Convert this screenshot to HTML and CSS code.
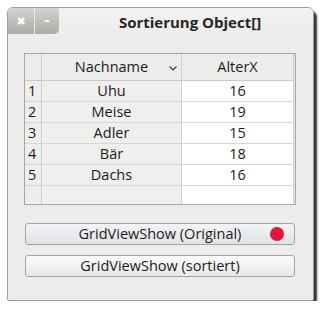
FILE: index.html
```html
<!DOCTYPE html>
<html lang="de">
<head>
    <meta charset="UTF-8">
    <title>Sortierung Object[]</title>
    <link rel="stylesheet" href="styles.css">
</head>
<body>
    <div class="window">
        <!-- Title bar -->
        <div class="titlebar">
            <button class="tb-btn tb-close">&#x2716;</button>
            <button class="tb-btn tb-min">&#x2013;</button>
            <div class="title">Sortierung Object[]</div>
        </div>

        <div class="content">
            <!-- Grid -->
            <div class="grid">
                <div class="cell corner"></div>
                <div class="cell head">Nachname
                    <svg class="sort" width="8" height="5" viewBox="0 0 8 5">
                        <polyline points="0.5,0.5 4,4 7.5,0.5" fill="none" stroke="#3c3c3c" stroke-width="1.2"/>
                    </svg>
                </div>
                <div class="cell head">AlterX</div>

                <div class="cell rownum">1</div>
                <div class="cell name">Uhu</div>
                <div class="cell age">16</div>

                <div class="cell rownum">2</div>
                <div class="cell name">Meise</div>
                <div class="cell age">19</div>

                <div class="cell rownum">3</div>
                <div class="cell name">Adler</div>
                <div class="cell age">15</div>

                <div class="cell rownum">4</div>
                <div class="cell name">Bär</div>
                <div class="cell age">18</div>

                <div class="cell rownum">5</div>
                <div class="cell name">Dachs</div>
                <div class="cell age">16</div>

                <div class="cell rownum filler"></div>
                <div class="cell name filler"></div>
                <div class="cell age filler"></div>
            </div>

            <!-- Buttons -->
            <button class="action active">GridViewShow (Original)<span class="dot"></span></button>
            <button class="action">GridViewShow (sortiert)</button>
        </div>
    </div>
</body>
</html>
```

FILE: styles.css
```css
/* Page */
body {
    margin: 0;
    background-color: #ffffff;
    font-family: "Open Sans", "DejaVu Sans", sans-serif;
    font-size: 14.5px;
    color: #1c1c1c;
}

/* Window */
.window {
    margin: 7px 0 0 7px;
    width: 305px;
    height: 292px;
    background-color: #edeceb;
    border: 1px solid #9d9d9a;
    border-radius: 6px 6px 2px 2px;
    box-shadow: 3px 4px 2px rgba(0, 0, 0, 0.8);
    overflow: hidden;
}

/* Title bar */
.titlebar {
    display: flex;
    height: 26px;
    background: linear-gradient(#f3f2f1, #edeceb);
}

.tb-btn {
    width: 27px;
    height: 26px;
    border: none;
    padding: 0;
    color: #ffffff;
    font-family: "DejaVu Sans", sans-serif;
    font-weight: bold;
    background: linear-gradient(#d4d3d0, #acaba8);
    cursor: pointer;
}

.tb-close {
    font-size: 11px;
    border-right: 1px solid #e9e8e6;
}

.tb-min {
    width: 24px;
    font-size: 12px;
    border-bottom-right-radius: 5px;
}

.title {
    flex: 1;
    text-align: center;
    padding-left: 8px;
    line-height: 29px;
    font-size: 15px;
    font-weight: bold;
    color: #262626;
}

/* Content */
.content {
    padding: 19px 17px 0 16px;
}

/* Grid */
.grid {
    display: grid;
    grid-template-columns: 17px 140px 112px;
    grid-template-rows: 27px repeat(5, 21px) 18px;
    height: 150px;
    border: 1px solid #a6a6a4;
    background-color: #e9e8e7;
}

.cell {
    border-right: 1px solid #cdcdcb;
    border-bottom: 1px solid #d6d6d4;
    display: flex;
    align-items: center;
    justify-content: center;
    line-height: 1;
}

.corner,
.head {
    background-color: #edeceb;
    border-bottom-color: #c9c9c7;
    position: relative;
}

.head {
    padding-top: 1px;
}

.sort {
    position: absolute;
    right: 4px;
    top: 12px;
}

.rownum {
    justify-content: flex-start;
    padding-left: 3px;
    background-color: #efeeed;
}

.name {
    background-color: #f0efee;
}

.age {
    background-color: #ffffff;
}

.filler {
    border-bottom: none;
}

/* Buttons */
.action {
    position: relative;
    display: block;
    width: 270px;
    height: 22px;
    margin: 0 0 0 1px;
    padding: 0;
    border: 1px solid #a3a3a1;
    border-radius: 3px;
    background: linear-gradient(#fbfbfb, #e8e8e7);
    font-family: inherit;
    font-size: 14.5px;
    line-height: 1;
    color: #1c1c1c;
    cursor: pointer;
}

.action.active {
    margin-top: 18px;
    background: linear-gradient(#f3f4f6, #dfe2e6);
}

.action + .action {
    margin-top: 10px;
}

.dot {
    position: absolute;
    right: 10px;
    top: 3px;
    width: 14px;
    height: 14px;
    border-radius: 50%;
    background-color: #e0163a;
}
```
